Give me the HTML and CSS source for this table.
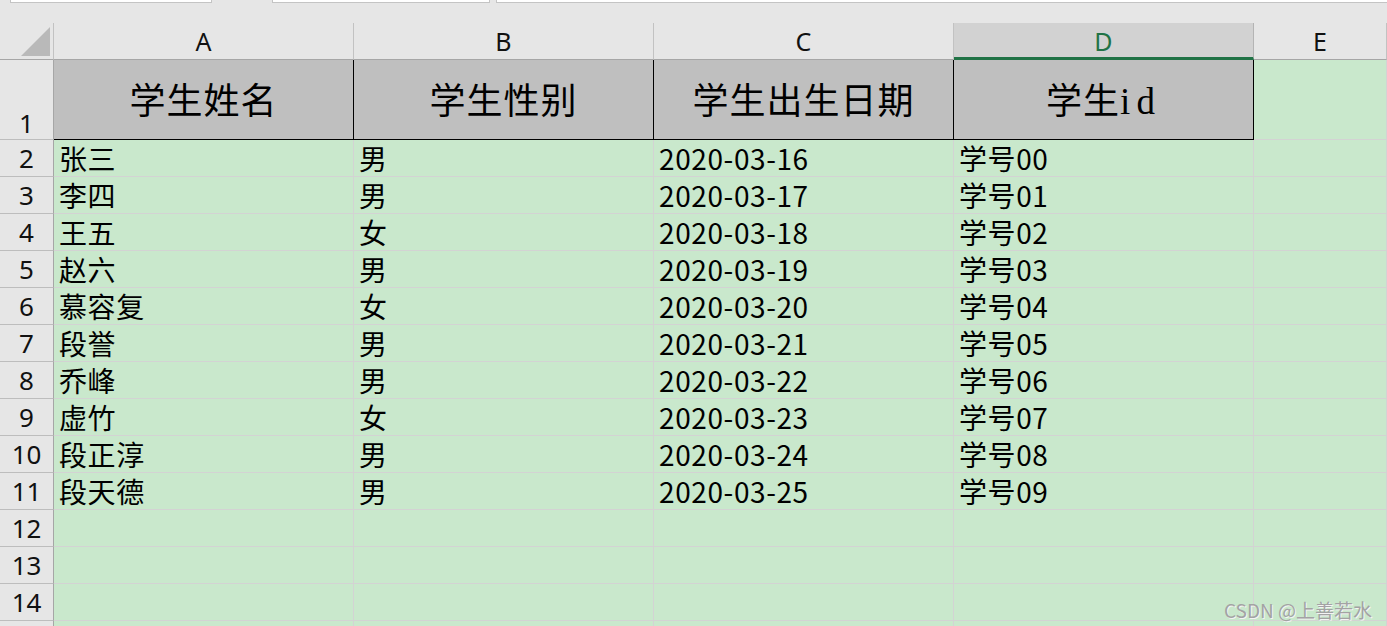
FILE: index.html
```html
<!DOCTYPE html>
<html lang="zh">
<head>
<meta charset="utf-8">
<title>学生表</title>
<link rel="stylesheet" href="styles.css">
</head>
<body>
<div class="topbar">
  <div class="box box1"></div>
  <div class="box box2"></div>
  <div class="box box3"></div>
</div>
<div class="sheet">
  <div class="corner"><span class="tri"></span></div>
  <div class="colh">A</div>
  <div class="colh">B</div>
  <div class="colh">C</div>
  <div class="colh sel">D</div>
  <div class="colh">E</div>

  <div class="rowh r1">1</div>
  <div class="th">学生姓名</div>
  <div class="th">学生性别</div>
  <div class="th">学生出生日期</div>
  <div class="th">学生<span class="lat">id</span></div>
  <div class="td"></div>

  <div class="rowh">2</div><div class="td">张三</div><div class="td">男</div><div class="td">2020-03-16</div><div class="td">学号00</div><div class="td"></div>
  <div class="rowh">3</div><div class="td">李四</div><div class="td">男</div><div class="td">2020-03-17</div><div class="td">学号01</div><div class="td"></div>
  <div class="rowh">4</div><div class="td">王五</div><div class="td">女</div><div class="td">2020-03-18</div><div class="td">学号02</div><div class="td"></div>
  <div class="rowh">5</div><div class="td">赵六</div><div class="td">男</div><div class="td">2020-03-19</div><div class="td">学号03</div><div class="td"></div>
  <div class="rowh">6</div><div class="td">慕容复</div><div class="td">女</div><div class="td">2020-03-20</div><div class="td">学号04</div><div class="td"></div>
  <div class="rowh">7</div><div class="td">段誉</div><div class="td">男</div><div class="td">2020-03-21</div><div class="td">学号05</div><div class="td"></div>
  <div class="rowh">8</div><div class="td">乔峰</div><div class="td">男</div><div class="td">2020-03-22</div><div class="td">学号06</div><div class="td"></div>
  <div class="rowh">9</div><div class="td">虚竹</div><div class="td">女</div><div class="td">2020-03-23</div><div class="td">学号07</div><div class="td"></div>
  <div class="rowh">10</div><div class="td">段正淳</div><div class="td">男</div><div class="td">2020-03-24</div><div class="td">学号08</div><div class="td"></div>
  <div class="rowh">11</div><div class="td">段天德</div><div class="td">男</div><div class="td">2020-03-25</div><div class="td">学号09</div><div class="td"></div>
  <div class="rowh">12</div><div class="td"></div><div class="td"></div><div class="td"></div><div class="td"></div><div class="td"></div>
  <div class="rowh">13</div><div class="td"></div><div class="td"></div><div class="td"></div><div class="td"></div><div class="td"></div>
  <div class="rowh">14</div><div class="td"></div><div class="td"></div><div class="td"></div><div class="td"></div><div class="td"></div>
  <div class="rowh"></div><div class="td"></div><div class="td"></div><div class="td"></div><div class="td"></div><div class="td"></div>
</div>
<div class="watermark">CSDN @上善若水</div>
</body>
</html>
```
FILE: styles.css
```css
* { box-sizing: border-box; }
html, body {
  margin: 0;
  padding: 0;
  width: 1387px;
  height: 626px;
  overflow: hidden;
  background: #e6e6e6;
  position: relative;
}
.topbar {
  height: 23px;
  display: flex;
  align-items: flex-start;
  background: #e6e6e6;
}
.box {
  height: 3px;
  background: #ffffff;
  border: 1px solid #c4c4c4;
  border-top: none;
}
.box1 { margin-left: 10px; width: 202px; }
.box2 { margin-left: 60px; width: 218px; }
.box3 { margin-left: 6px; flex: 1; border-right: none; }

.sheet {
  height: 603px;
  overflow: hidden;
  display: grid;
  grid-template-columns: 54px 300px 300px 300px 300px 133px;
  grid-template-rows: 37px 80px repeat(13, 37px) 6px;
}
.corner {
  background: #e6e6e6;
  border-right: 1px solid #c2c2c2;
  border-bottom: 1px solid #a6a6a6;
  position: relative;
}
.tri {
  position: absolute;
  right: 3px;
  bottom: 3px;
  width: 29px;
  height: 29px;
  background: #b9b9b9;
  clip-path: polygon(100% 0, 100% 100%, 0 100%);
}
.colh {
  background: #e6e6e6;
  border-right: 1px solid #c2c2c2;
  border-bottom: 1px solid #a6a6a6;
  font-family: "Noto Sans", "Liberation Sans", sans-serif;
  font-size: 25px;
  line-height: 1;
  color: #111;
  display: flex;
  justify-content: center;
  align-items: flex-end;
  padding-bottom: 5px;
}
.colh.sel {
  background: #d2d2d2;
  color: #217346;
  border-bottom: 3px solid #217346;
  padding-bottom: 3px;
  border-right-color: #b4b4b4;
}
.rowh {
  background: #e6e6e6;
  border-right: 1px solid #a6a6a6;
  border-bottom: 1px solid #bdbdbd;
  font-family: "Noto Sans", "Liberation Sans", sans-serif;
  font-size: 26px;
  line-height: 1;
  color: #111;
  display: flex;
  justify-content: center;
  align-items: flex-end;
  padding-bottom: 5px;
}
.rowh.r1 { padding-bottom: 3px; }
.th {
  background: #bfbfbf;
  border-right: 1px solid #000;
  border-bottom: 1px solid #000;
  font-family: "Liberation Serif", "Noto Sans CJK SC", serif;
  font-size: 36px;
  letter-spacing: 1px;
  color: #000;
  display: flex;
  justify-content: center;
  align-items: center;
  padding-top: 4px;
  line-height: 72px;
}
.th .lat {
  letter-spacing: 6px;
  font-size: 37px;
}
.td {
  background: #c9e8cc;
  border-right: 1px solid #d3d3d3;
  border-bottom: 1px solid #d3d3d3;
  font-family: "Noto Sans CJK SC", "Noto Sans", sans-serif;
  font-size: 28px;
  letter-spacing: 0.6px;
  line-height: 36px;
  color: #000;
  padding-left: 5px;
  white-space: nowrap;
}
.watermark {
  position: absolute;
  right: 15px;
  bottom: 5px;
  font-family: "Noto Sans CJK SC", "Noto Sans", sans-serif;
  font-size: 19px;
  line-height: 22px;
  color: #a3a3a3;
  text-shadow: 1px 1px 0 #f4f4f4;
}
```
